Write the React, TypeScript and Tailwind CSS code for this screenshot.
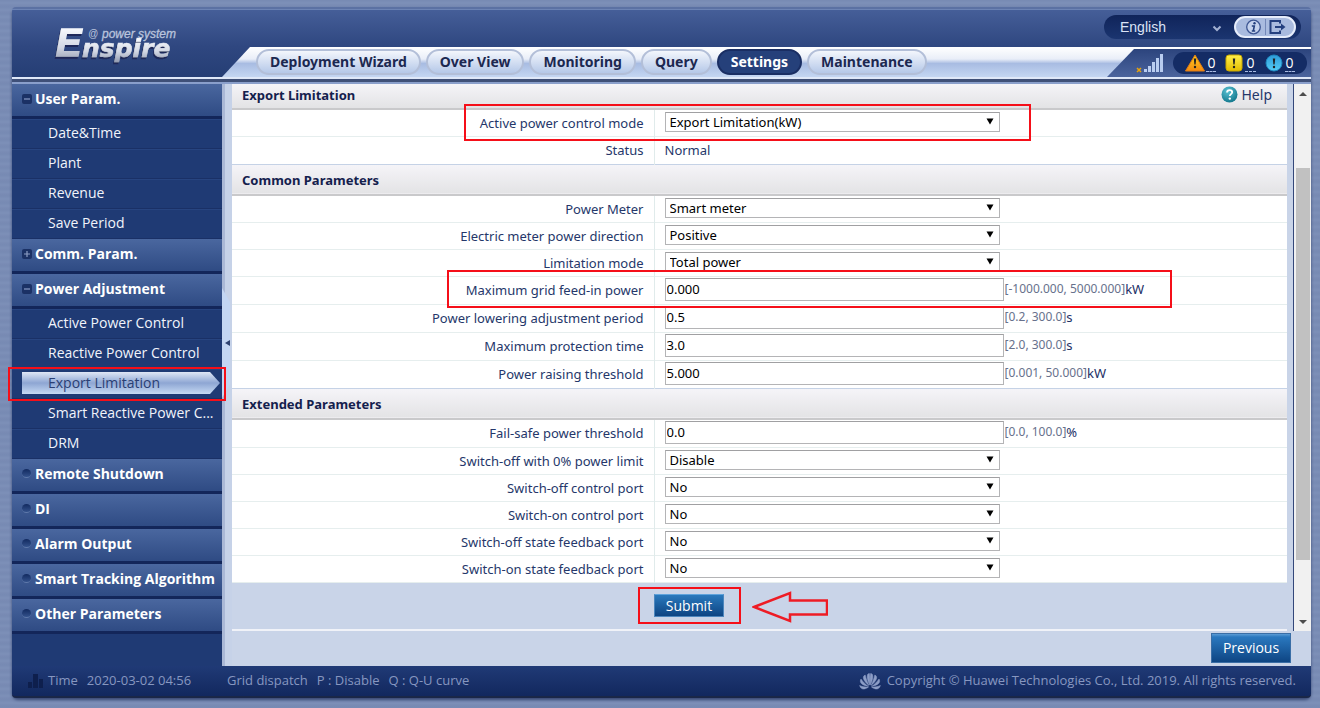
import { useId, useState } from "react";
import type { ReactNode } from "react";
import clsx from "clsx";

type MenuGroup = { title: string; state: "open" | "closed" | "leaf"; items?: string[] };

const MENU: MenuGroup[] = [
  { title: "User Param.", state: "open", items: ["Date&Time", "Plant", "Revenue", "Save Period"] },
  { title: "Comm. Param.", state: "closed" },
  {
    title: "Power Adjustment",
    state: "open",
    items: [
      "Active Power Control",
      "Reactive Power Control",
      "Export Limitation",
      "Smart Reactive Power C...",
      "DRM",
    ],
  },
  { title: "Remote Shutdown", state: "leaf" },
  { title: "DI", state: "leaf" },
  { title: "Alarm Output", state: "leaf" },
  { title: "Smart Tracking Algorithm", state: "leaf" },
  { title: "Other Parameters", state: "leaf" },
];

const TABS = ["Deployment Wizard", "Over View", "Monitoring", "Query", "Settings", "Maintenance"];

function Logo() {
  return (
    <svg width="140" height="48" viewBox="0 0 140 48" role="img" aria-label="Enspire @ power system">
      <defs>
        <linearGradient id="logo-metal" x1="0" y1="0" x2="0" y2="1">
          <stop offset="0.2" stopColor="#f4f6fb" />
          <stop offset="0.6" stopColor="#d3d8e4" />
          <stop offset="1" stopColor="#8d96ad" />
        </linearGradient>
        <filter id="logo-shadow" x="-10%" y="-10%" width="120%" height="130%">
          <feDropShadow dx="-1" dy="2" stdDeviation="0.6" floodColor="#13244f" floodOpacity="0.8" />
        </filter>
      </defs>
      <g filter="url(#logo-shadow)" fill="url(#logo-metal)" stroke="url(#logo-metal)" fontStyle="italic">
        <text x="6" y="33" fontSize="38" strokeWidth="1.5" fontWeight="700" fontFamily="Liberation Sans, sans-serif">E</text>
        <text x="32" y="34" fontSize="25" strokeWidth="0.6" fontWeight="700" fontFamily="DejaVu Sans, sans-serif">nspire</text>
      </g>
      <g fill="#b9c3dc" fontStyle="italic" fontFamily="Liberation Sans, sans-serif">
        <text x="38" y="14" fontSize="10">@</text>
        <text x="52" y="15" fontSize="12" stroke="#b9c3dc" strokeWidth="0.3">power system</text>
      </g>
    </svg>
  );
}

function GroupMark({ state }: { state: MenuGroup["state"] }) {
  if (state === "leaf") {
    return <span className="mr-px size-[9px] shrink-0 rounded-full border-b border-[#5f79aa] bg-linear-to-b from-[#122a60] to-[#34528c]" />;
  }
  return (
    <svg width="10" height="10" viewBox="0 0 10 10" className="shrink-0" aria-hidden="true">
      <rect width="10" height="10" rx="2" fill="#1b3165" />
      <path d={state === "open" ? "M2 5H8" : "M2 5H8M5 2V8"} stroke="#8c9dc4" strokeWidth="1.2" />
    </svg>
  );
}

function Sidebar() {
  return (
    <nav className="w-[210px] shrink-0 bg-[#1f3a74]">
      {MENU.map((group) => (
        <div key={group.title}>
          <button
            type="button"
            className="flex h-[35px] w-full items-center gap-[3px] border-b-3 border-[#13265a] bg-linear-to-b from-[#4a679f] to-[#2f4b84] pb-[3px] pl-[10px] text-left text-sm font-bold whitespace-nowrap text-white"
          >
            <GroupMark state={group.state} />
            {group.title}
          </button>
          {group.items && (
            <ul>
              {group.items.map((item) => {
                const active = item === "Export Limitation";
                return (
                  <li key={item} className="relative flex h-[30px] items-center border-b border-[#1a3066] border-t border-t-[#274480] pb-[2px]">
                    {active && (
                      <span className="absolute top-[2px] right-[2px] bottom-[4px] left-[10px] bg-linear-to-b from-[#dfe6f5] via-[#8ea6d3] to-[#c6d9f3] [clip-path:polygon(0_0,calc(100%_-_10px)_0,100%_50%,calc(100%_-_10px)_100%,0_100%)]" />
                    )}
                    <a href="#" className={clsx("relative pl-[36px] text-sm whitespace-nowrap", active ? "text-[#2a3f74]" : "text-[#f1f4fb]")}>
                      {item}
                    </a>
                    {active && <span className="absolute -top-[3px] -left-[4px] z-20 h-[34px] w-[218px] border-2 border-[#f50f19]" />}
                  </li>
                );
              })}
            </ul>
          )}
        </div>
      ))}
    </nav>
  );
}

function SectionTitle({ children, first }: { children: ReactNode; first?: boolean }) {
  return (
    <tr>
      <th
        colSpan={2}
        scope="colgroup"
        className={clsx(
          "border-b-2 border-[#c9c9cb] bg-linear-to-b from-[#f5f4f8] to-[#e3e3e5] px-[10px] text-left leading-5 font-bold text-[#14204d]",
          first ? "h-[25px] pt-0 pb-[3px]" : "h-[31px] border-t border-t-[#c5d2e6] pt-px pb-0",
        )}
      >
        {first ? (
          <span className="flex items-center justify-between">
            {children}
            <a href="#" className="flex items-center gap-[4px] pr-[5px] text-sm leading-5 font-normal text-[#25376a]">
              <svg width="17" height="17" viewBox="0 0 17 17" aria-hidden="true">
                <defs>
                  <radialGradient id="help-ball" cx="0.4" cy="0.3" r="0.8">
                    <stop offset="0" stopColor="#5cc3d4" />
                    <stop offset="1" stopColor="#0b6f85" />
                  </radialGradient>
                </defs>
                <circle cx="8.5" cy="8.5" r="8" fill="url(#help-ball)" />
                <path d="M6 6.6C6 5 7.1 4.1 8.6 4.1s2.6.9 2.6 2.2c0 1.7-2.4 1.9-2.4 3.7" fill="none" stroke="#fff" strokeWidth="1.8" />
                <circle cx="8.8" cy="12.6" r="1.2" fill="#fff" />
              </svg>
              Help
            </a>
          </span>
        ) : (
          children
        )}
      </th>
    </tr>
  );
}

type RowProps = {
  label: string;
  kind: "select" | "input" | "text";
  value: string;
  range?: string;
  unit?: string;
  mark?: "mode" | "feed";
};

function Row({ label, kind, value, range, unit, mark }: RowProps) {
  const id = useId();
  return (
    <tr className={clsx("border-b border-[#e6eeee] bg-white", kind === "select" ? "h-[27px]" : "h-[28px]")}>
      <td className="w-2/5 border-r border-[#e0ebeb] p-0 pr-[10px] text-right text-[#25376a]">
        {kind === "text" ? label : <label htmlFor={id}>{label}</label>}
      </td>
      <td className={clsx("relative p-0 pl-[10px]", kind !== "text" && "pb-[2px]")}>
        {kind === "text" && <span className="text-[#25376a]">{value}</span>}
        {kind === "select" && (
          <span className="relative flex h-5 w-[335px] text-black">
            <select id={id} className="w-full appearance-none border border-[#b4b4b6] border-t-[#a0a0a2] bg-white pl-[4px] leading-4">
              <option>{value}</option>
            </select>
            <svg width="8" height="7" viewBox="0 0 8 7" className="pointer-events-none absolute top-[6px] right-[6px]" aria-hidden="true">
              <path d="M0.5 0.5H7.5L4 6.5Z" fill="#000" />
            </svg>
          </span>
        )}
        {kind === "input" && (
          <span className="flex items-center">
            <input id={id} defaultValue={value} className="h-[23px] w-[339px] border border-[#b4b4b6] border-t-[#a0a0a2] bg-white pl-px text-black outline-none" />
            <span className="pl-px text-xs leading-5 text-[#67718c]">{range}</span>
            <span className="text-[#1d2f66]">{unit}</span>
          </span>
        )}
        {mark === "mode" && <span className="pointer-events-none absolute -top-[6px] -left-[191px] z-10 h-[37px] w-[567px] border-2 border-[#f50f19]" />}
        {mark === "feed" && <span className="pointer-events-none absolute -top-[7px] -left-[208px] z-10 h-[38px] w-[725px] border-2 border-[#f50f19]" />}
      </td>
    </tr>
  );
}

function SettingsForm() {
  return (
    <form className="min-w-0 flex-1" onSubmit={(e) => e.preventDefault()}>
      <table className="w-full border-collapse font-['Noto_Sans',sans-serif] text-[13px] leading-5">
        <tbody>
          <SectionTitle first>Export Limitation</SectionTitle>
          <Row label="Active power control mode" kind="select" value="Export Limitation(kW)" mark="mode" />
          <Row label="Status" kind="text" value="Normal" />
          <SectionTitle>Common Parameters</SectionTitle>
          <Row label="Power Meter" kind="select" value="Smart meter" />
          <Row label="Electric meter power direction" kind="select" value="Positive" />
          <Row label="Limitation mode" kind="select" value="Total power" />
          <Row label="Maximum grid feed-in power" kind="input" value="0.000" range="[-1000.000, 5000.000]" unit="kW" mark="feed" />
          <Row label="Power lowering adjustment period" kind="input" value="0.5" range="[0.2, 300.0]" unit="s" />
          <Row label="Maximum protection time" kind="input" value="3.0" range="[2.0, 300.0]" unit="s" />
          <Row label="Power raising threshold" kind="input" value="5.000" range="[0.001, 50.000]" unit="kW" />
          <SectionTitle>Extended Parameters</SectionTitle>
          <Row label="Fail-safe power threshold" kind="input" value="0.0" range="[0.0, 100.0]" unit="%" />
          <Row label="Switch-off with 0% power limit" kind="select" value="Disable" />
          <Row label="Switch-off control port" kind="select" value="No" />
          <Row label="Switch-on control port" kind="select" value="No" />
          <Row label="Switch-off state feedback port" kind="select" value="No" />
          <Row label="Switch-on state feedback port" kind="select" value="No" />
        </tbody>
      </table>
      <div className="grid h-[48px] grid-cols-[2fr_3fr] items-center border-b-2 border-[#f0f2f8]">
        <span />
        <div className="relative">
          <button type="submit" className="block h-[23px] w-[70px] border border-[#4c86bd] border-t-[#5fa3dc] bg-linear-to-b from-[#2a79bd] to-[#0e4583] text-sm leading-5 text-white">
            Submit
          </button>
          <span className="pointer-events-none absolute -top-[7px] -left-[16px] h-[37px] w-[103px] border-2 border-[#f50f19]" />
          <svg width="76" height="32" viewBox="0 0 76 32" className="absolute -top-[3px] left-[98px]" aria-hidden="true">
            <path d="M2 16L38 2V9.500H75V23.500H38V30Z" fill="none" stroke="#ee1c25" strokeWidth="2.500" />
          </svg>
        </div>
      </div>
    </form>
  );
}

function Alarm({ kind }: { kind: "major" | "minor" | "warning" }) {
  return (
    <a href="#" className="flex items-center gap-px text-sm leading-4 text-white">
      <svg width="20" height="20" viewBox="0 0 20 20" aria-hidden="true">
        {kind === "major" && <path d="M10 2L19.500 18H0.500Z" fill="url(#alarm-major)" stroke="#e07c12" />}
        {kind === "minor" && <rect x="2" y="2" width="16" height="16" rx="3" fill="url(#alarm-minor)" stroke="#c9a800" />}
        {kind === "warning" && <circle cx="10" cy="10" r="8" fill="url(#alarm-warning)" stroke="#1f86bd" />}
        <path d="M8.800 5.500H11.200L10.600 11.500H9.400Z" fill="#222" />
        <circle cx="10" cy="14" r="1.200" fill="#222" />
      </svg>
      <span className="border-b border-dashed border-[#a9bbe2] px-px">0</span>
    </a>
  );
}

function Header() {
  const [tab, setTab] = useState("Settings");
  return (
    <header className="flex h-[77px] shrink-0 flex-col rounded-t border-t-2 border-[#5b71a3] bg-linear-to-b from-[#465f99] via-[#2f4780] to-[#233c72]">
      <svg width="0" height="0" className="absolute" aria-hidden="true">
        <defs>
          <linearGradient id="alarm-major" x1="0" y1="0" x2="0" y2="1">
            <stop offset="0" stopColor="#ffd21c" />
            <stop offset="1" stopColor="#f58a12" />
          </linearGradient>
          <linearGradient id="alarm-minor" x1="0" y1="0" x2="0" y2="1">
            <stop offset="0" stopColor="#fff04a" />
            <stop offset="1" stopColor="#e4bd00" />
          </linearGradient>
          <linearGradient id="alarm-warning" x1="0" y1="0" x2="0" y2="1">
            <stop offset="0" stopColor="#2d9bd8" />
            <stop offset="1" stopColor="#54cdf6" />
          </linearGradient>
        </defs>
      </svg>
      <div className="flex min-h-0 flex-1 border-t border-[#6d84b5]">
        <div className="w-[210px] shrink-0 pt-[13px] pl-[38px]">
          <Logo />
        </div>
        <div className="flex flex-1 flex-col justify-between">
          <div className="flex justify-end pt-[5px] pr-[10px]">
            <div className="flex h-6 w-[197px] items-center rounded-full bg-linear-to-b from-[#10245a] to-[#1b3570] pl-4">
              <div className="relative flex w-[102px] items-center">
                <select aria-label="Language" className="w-full appearance-none bg-transparent font-['Liberation_Sans',sans-serif] text-sm leading-5 text-[#dce4f6]">
                  <option>English</option>
                </select>
                <svg width="10" height="7" viewBox="0 0 10 7" className="pointer-events-none absolute top-[8px] right-0" aria-hidden="true">
                  <path d="M1.500 1.500L5 5L8.500 1.500" fill="none" stroke="#a3b1d2" strokeWidth="2" />
                </svg>
              </div>
              <div className="ml-3 flex h-[22px] w-[62px] items-center justify-center rounded-full border-2 border-[#e6edfb] bg-[#a9bbdf]">
                <button type="button" aria-label="About">
                  <svg width="21" height="18" viewBox="0 0 21 18" fill="none">
                    <circle cx="10.500" cy="9" r="6.800" fill="#c5d2ed" stroke="#3c5592" strokeWidth="1.300" />
                    <circle cx="11.500" cy="5.300" r="1.200" fill="#24407f" />
                    <path d="M8.800 8H11.300L10.300 13H12.200M8.800 13H10.500" stroke="#24407f" strokeWidth="1.600" />
                  </svg>
                </button>
                <span className="mx-px h-[16px] w-px bg-[#7388b8]" />
                <button type="button" aria-label="Log out">
                  <svg width="21" height="18" viewBox="0 0 21 18" fill="none" stroke="#24407f" strokeWidth="2">
                    <path d="M13 5.500V3H3.500V15H13V12.500" />
                    <path d="M8 9H15" />
                    <path d="M14 5.500L18.500 9L14 12.500Z" fill="#24407f" stroke="none" />
                  </svg>
                </button>
              </div>
            </div>
          </div>
          <div className="flex h-[30px] bg-[linear-gradient(#fff_0,#e9eef8_40%,#a8bce2_55%,#c4d6f2_100%)] [clip-path:polygon(28px_0,100%_0,100%_100%,0_100%)]">
            <div className="flex flex-1 items-center gap-[5px] pl-[34px]">
              {TABS.map((name) => (
                <button
                  key={name}
                  type="button"
                  onClick={() => setTab(name)}
                  className={clsx(
                    "h-[26px] rounded-full border-2 px-[12px] font-['Noto_Sans',sans-serif] text-sm leading-5 font-bold whitespace-nowrap",
                    name === tab
                      ? "border-[#1a2e63] bg-[#25407a] text-white"
                      : "border-[#b3bfd8] bg-linear-to-b from-[#f3f6fc] to-[#b5c8e8] text-[#1c2850]",
                  )}
                >
                  {name}
                </button>
              ))}
            </div>
            <div className="mt-[2px] flex w-[204px] items-center justify-end bg-linear-to-b from-[#2c447d] to-[#4b649d] pr-[4px] [clip-path:polygon(27px_0,100%_0,100%_100%,0_100%)]">
              <svg width="29" height="20" viewBox="0 0 29 20" className="mr-[8px]" aria-label="Signal">
                <path d="M1 15L5 19M5 15L1 19" stroke="#e8a30c" strokeWidth="1.500" />
                <path d="M8 16h3v3h-3zM12 13h3v6h-3zM16 9h3v10h-3zM20 5h3v14h-3zM24 1h3v18h-3z" fill="#b9cdf0" />
              </svg>
              <div className="flex h-[22px] w-[134px] items-center justify-center gap-[8px] rounded-full bg-[#142c65]">
                <Alarm kind="major" />
                <Alarm kind="minor" />
                <Alarm kind="warning" />
              </div>
            </div>
          </div>
        </div>
      </div>
      <div className="h-[7px] shrink-0 border-t-2 border-b-2 border-t-[#dfe8f8] border-b-[#8a9fcb] bg-[#3f5078]" />
    </header>
  );
}

function HuaweiFlower() {
  return (
    <svg width="22" height="17" viewBox="0 0 22 17" fill="#8c9dc6" stroke="#8c9dc6" strokeWidth="0.5" aria-hidden="true">
      <path d="M10.600 12C8.800 8 7.500 4 8.600 1.500C9 .7 9.800.5 10.400.5C11 3 11 8 10.600 12Z" />
      <path d="M11.400 12C13.200 8 14.500 4 13.400 1.500C13 .7 12.200.5 11.600.5C11 3 11 8 11.400 12Z" />
      <path d="M9.900 12.500C6.500 9.500 4 6.500 4.400 4C4.600 3 5.400 2.400 6.200 2C7 5.500 8.500 9.500 9.900 12.500Z" />
      <path d="M12.100 12.500C15.500 9.500 18 6.500 17.600 4C17.400 3 16.600 2.400 15.800 2C15 5.500 13.500 9.500 12.100 12.500Z" />
      <path d="M9.400 13.400C5 12.500 1.800 11 1.400 8.700C1.200 7.500 1.600 6.500 2 6C4 9 7 11.800 9.400 13.400Z" />
      <path d="M12.600 13.400C17 12.500 20.200 11 20.600 8.700C20.800 7.500 20.400 6.500 20 6C18 9 15 11.800 12.600 13.400Z" />
      <path d="M9.400 14.200C7 15.600 5 16.500 3.300 15.800C1.800 15.200 1 13.800.6 12.500C3 13.600 6.500 14.200 9.400 14.200Z" />
      <path d="M12.600 14.200C15 15.600 17 16.500 18.700 15.800C20.200 15.200 21 13.800 21.400 12.500C19 13.600 15.500 14.200 12.600 14.200Z" />
    </svg>
  );
}

function Footer() {
  return (
    <footer className="flex h-8 shrink-0 items-center rounded-b border-b-2 border-[#1a2748] bg-linear-to-b from-[#203a76] to-[#12285e] pr-[15px] pl-[15px] text-[13px] text-[#8797c0]">
      <div className="flex w-[200px] items-center">
        <svg width="17" height="16" viewBox="0 0 17 16" fill="#0e1f4d" aria-hidden="true">
          <path d="M1 9h4v6h-4zM6 1h5v14h-5zM12 6h4v9h-4z" />
        </svg>
        <span className="pl-[4px]">Time</span>
        <span className="pl-[9px]">2020-03-02 04:56</span>
      </div>
      <div className="flex gap-[9px]">
        <span>Grid dispatch</span>
        <span>P : Disable</span>
        <span>Q : Q-U curve</span>
      </div>
      <div className="ml-auto flex items-center gap-[6px]">
        <HuaweiFlower />
        <span>Copyright © Huawei Technologies Co., Ltd. 2019. All rights reserved.</span>
      </div>
    </footer>
  );
}

export default function App() {
  return (
    <div className="flex min-h-screen flex-col bg-[#7b8db6] bg-[repeating-linear-gradient(#778ab3_0,#7d90b8_3px,#798bb4_5px,#778ab3_7px)] pt-[7px] pr-[9px] pb-[10px] pl-[12px] font-['Open_Sans',sans-serif]">
      <div className="flex flex-1 flex-col rounded-md shadow-[0_2px_3px_#3a4a75]">
        <Header />
        <div className="flex flex-1">
          <Sidebar />
          <div className="relative w-[10px] shrink-0 border-l-3 border-[#aab8d6] bg-[#c6d2e8]">
            <button
              type="button"
              aria-label="Collapse menu"
              className="absolute top-[204px] -left-[3px] flex h-[110px] w-[8px] items-center justify-end bg-[#c3d6f3] [clip-path:polygon(0_0,100%_14px,100%_96px,0_100%)]"
            >
              <svg width="5" height="6" viewBox="0 0 5 6" aria-hidden="true">
                <path d="M5 0V6L0 3Z" fill="#2e4271" />
              </svg>
            </button>
          </div>
          <main className="flex min-w-0 flex-1 flex-col bg-[#c9d4e8]">
            <div className="flex">
              <SettingsForm />
              <div className="ml-[6px] flex w-[18px] shrink-0 flex-col items-center border-l border-[#34487a] bg-[#f1f1f1]">
                <svg width="8" height="16" viewBox="0 0 8 16" aria-hidden="true">
                  <path d="M0 12L4 8L8 12Z" fill="#4d4d4d" />
                </svg>
                <div className="mt-[68px] h-[392px] w-[14px] bg-[#c1c1c1]" />
                <svg width="8" height="16" viewBox="0 0 8 16" className="mt-auto" aria-hidden="true">
                  <path d="M0 5L4 9L8 5Z" fill="#4d4d4d" />
                </svg>
              </div>
            </div>
            <div className="flex flex-1 items-center justify-end pr-[20px]">
              <button type="button" className="h-[30px] w-[80px] border border-[#3a6ea6] bg-[linear-gradient(#5b9bd5_0,#2a78bf_3px,#0e4583_100%)] text-sm leading-5 text-white">
                Previous
              </button>
            </div>
          </main>
        </div>
        <Footer />
      </div>
    </div>
  );
}
